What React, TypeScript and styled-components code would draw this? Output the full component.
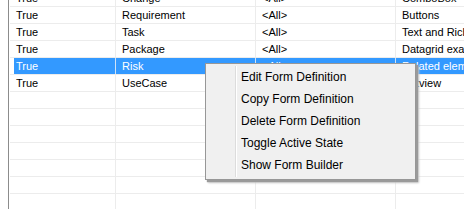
import React from 'react'
import styled, { createGlobalStyle } from 'styled-components'

const GlobalStyle = createGlobalStyle`
	html, body
	{
		margin: 0;
		padding: 0;
		background: #ffffff;
		overflow: hidden;
	}
`

const Page = styled.div`
	position: relative;
	width: 464px;
	height: 209px;
	overflow: hidden;
	background: #ffffff;
	padding-left: 8px;
	box-sizing: border-box;
`

const Grid = styled.div`
	border-left: 1px solid #8c8c8c;
	height: 230px;
	margin-top: -10px;
	padding-left: 1px;
	font-family: "Liberation Sans", Arial, sans-serif;
	font-size: 11px;
	color: #000000;
`

const Row = styled.div`
	display: grid;
	grid-template-columns: 106px 140px 140px 200px;
	height: 16px;
	border-bottom: 1px solid #ececec;
`

const Cell = styled.div<{ $selected?: boolean; $first?: boolean }>`
	display: flex;
	align-items: center;
	padding-left: ${p => (p.$first ? '2px' : '6px')};
	margin-left: ${p => (p.$first ? '4px' : '0')};
	border-right: 1px solid #ececec;
	white-space: nowrap;
	overflow: hidden;
	background: ${p => (p.$selected ? '#3399ff' : 'transparent')};
	color: ${p => (p.$selected ? '#ffffff' : '#000000')};
	${p => p.$selected && 'border-right-color: #cfe3f7;'}
`

const Menu = styled.div`
	position: absolute;
	left: 205px;
	top: 63px;
	width: 207px;
	padding: 2px 0 3px 2px;
	background: #f0f0f0;
	border: 1px solid #979797;
	box-shadow: 2px 2px 1px #9a9a9a, 3px 3px 2px #c8c8c8;
	font-family: "Liberation Sans", Arial, sans-serif;
	font-size: 12px;
	color: #000000;
	display: flex;
	flex-direction: column;

	&::before
	{
		content: '';
		position: absolute;
		left: 29px;
		top: 2px;
		bottom: 2px;
		width: 1px;
		background: #dcdcdc;
		border-right: 1px solid #ffffff;
	}
`

const MenuItem = styled.div`
	height: 22px;
	display: flex;
	align-items: center;
	padding-left: 33px;
	white-space: nowrap;
`

type GridRow = { active: string; name: string; filter: string; template: string; selected?: boolean }

const rows: GridRow[] = [
	{ active: 'True', name: 'Change', filter: '<All>', template: 'ComboBox' },
	{ active: 'True', name: 'Requirement', filter: '<All>', template: 'Buttons' },
	{ active: 'True', name: 'Task', filter: '<All>', template: 'Text and Rich Text' },
	{ active: 'True', name: 'Package', filter: '<All>', template: 'Datagrid example' },
	{ active: 'True', name: 'Risk', filter: '<All>', template: 'Related elements', selected: true },
	{ active: 'True', name: 'UseCase', filter: '<All>', template: 'Listview' },
	{ active: '', name: '', filter: '', template: '' },
	{ active: '', name: '', filter: '', template: '' },
	{ active: '', name: '', filter: '', template: '' },
	{ active: '', name: '', filter: '', template: '' },
	{ active: '', name: '', filter: '', template: '' },
	{ active: '', name: '', filter: '', template: '' },
	{ active: '', name: '', filter: '', template: '' },
]

const menuItems = [
	'Edit Form Definition',
	'Copy Form Definition',
	'Delete Form Definition',
	'Toggle Active State',
	'Show Form Builder',
]

const App = () => (
	<Page>
		<GlobalStyle />
		<Grid>
			{rows.map((r, i) => (
				<Row key={i}>
					<Cell $first $selected={r.selected}>{r.active}</Cell>
					<Cell $selected={r.selected}>{r.name}</Cell>
					<Cell $selected={r.selected}>{r.filter}</Cell>
					<Cell $selected={r.selected}>{r.template}</Cell>
				</Row>
			))}
		</Grid>
		<Menu>
			{menuItems.map(m => (
				<MenuItem key={m}>{m}</MenuItem>
			))}
		</Menu>
	</Page>
)

export default App
